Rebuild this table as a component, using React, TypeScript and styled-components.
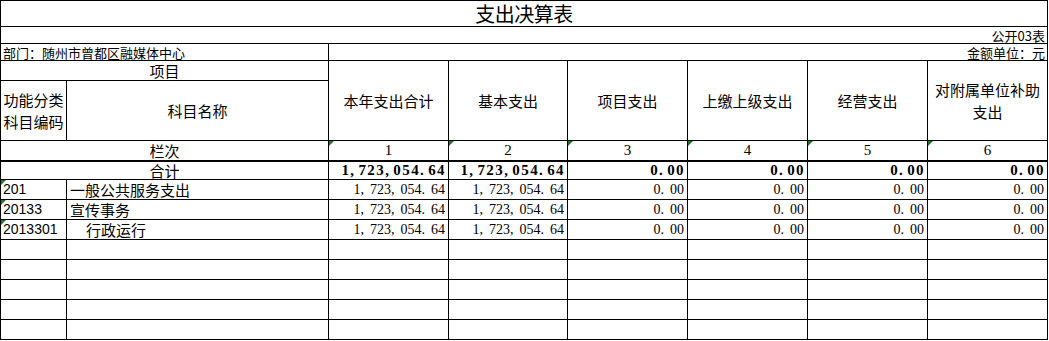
import React from 'react';
import styled, {createGlobalStyle} from 'styled-components';

const GlobalStyle = createGlobalStyle`
  html, body {
    margin: 0;
    padding: 0;
    background: #ffffff;
  }
`;

const Sheet = styled.table`
  border-collapse: collapse;
  table-layout: fixed;
  width: 1047px;
  color: #000;
  font-family: "Noto Sans CJK SC", sans-serif;
  font-size: 15px;
`;

const Row = styled.tr<{ $h: number }>`
  height: ${p => p.$h}px;
`;

const Cell = styled.td<{ $align?: 'left' | 'center' | 'right'; $thick?: boolean; $pad?: number }>`
  border: 1px solid #000;
  ${p => p.$thick && 'border-bottom: 2px solid #000;'}
  padding: 0 ${p => p.$pad ?? 2}px;
  text-align: ${p => p.$align ?? 'center'};
  vertical-align: middle;
  white-space: nowrap;
  overflow: hidden;
  line-height: 17px;
  position: relative;
`;

// the little green "number stored as text" marker excel puts in a cell corner
const FlagCell = styled(Cell)`
  &::before {
    content: "";
    position: absolute;
    left: 0;
    top: 0;
    border-top: 5px solid #1d7a2a;
    border-right: 5px solid transparent;
  }
`;

const Title = styled(Cell)`
  font-size: 20px;
  letter-spacing: -0.5px;
`;

const Small = styled(Cell)`
  font-size: 13px;
  line-height: 15px;
`;

const Head = styled(Cell)`
  white-space: normal;
  line-height: 22px;
  padding: 0 4px;
`;

// two hand-broken lines, as in the sheet
const Stacked = styled(Cell)`
  line-height: 22px;
  padding: 0;
`;

const Code = styled(FlagCell)`
  font-family: "Liberation Sans", sans-serif;
  font-size: 14px;
`;

const ColNo = styled(FlagCell)`
  font-family: "Liberation Serif", serif;
  font-size: 15px;
`;

const Num = styled(Cell)<{ $bold?: boolean }>`
  font-family: "Liberation Serif", serif;
  font-size: ${p => (p.$bold ? 15 : 14)}px;
  font-weight: ${p => (p.$bold ? 700 : 400)};
  letter-spacing: ${p => (p.$bold ? 1.4 : 0)}px;
  text-align: right;
  padding-right: ${p => (p.$bold ? 2 : 3)}px;
`;

const Punct = styled.span<{ $bold?: boolean }>`
  margin-right: ${p => (p.$bold ? 3 : 6)}px;
`;

const Name = styled(Cell)<{ $indent?: boolean }>`
  text-align: left;
  padding-left: ${p => (p.$indent ? 19 : 3)}px;
`;

const widths = [66, 262, 120, 119, 120, 120, 120, 120];

const heads = ['本年支出合计', '基本支出', '项目支出', '上缴上级支出', '经营支出', '对附属单位补助支出'];

const rows = [
    {code: '201', name: '一般公共服务支出', indent: false},
    {code: '20133', name: '宣传事务', indent: false},
    {code: '2013301', name: '行政运行', indent: true},
];

const amounts = ['1,723,054.64', '1,723,054.64', '0.00', '0.00', '0.00', '0.00'];

function Amount({value, bold}: { value: string; bold?: boolean }) {
    return (
        <Num $bold={bold}>
            {value.split(/([,.])/).map((part, i) =>
                part === ',' || part === '.'
                    ? <Punct key={i} $bold={bold}>{part}</Punct>
                    : part
            )}
        </Num>
    );
}

function App() {
    return (
        <>
            <GlobalStyle/>
            <Sheet>
                <colgroup>
                    {widths.map((w, i) => <col key={i} style={{width: w}}/>)}
                </colgroup>
                <tbody>
                <Row $h={26}>
                    <Title colSpan={8}>支出决算表</Title>
                </Row>
                <Row $h={17}>
                    <Small colSpan={8} $align="right">公开03表</Small>
                </Row>
                <Row $h={17}>
                    <Small colSpan={2} $align="left">部门：随州市曾都区融媒体中心</Small>
                    <Small colSpan={6} $align="right">金额单位：元</Small>
                </Row>
                <Row $h={20}>
                    <Cell colSpan={2}>项目</Cell>
                    {heads.map(h => (
                        <Head key={h} rowSpan={2}>{h}</Head>
                    ))}
                </Row>
                <Row $h={60}>
                    <Stacked>功能分类<br/>科目编码</Stacked>
                    <Cell>科目名称</Cell>
                </Row>
                <Row $h={20}>
                    <Cell colSpan={2} $thick>栏次</Cell>
                    {[1, 2, 3, 4, 5, 6].map(n => (
                        <ColNo key={n} $thick>{n}</ColNo>
                    ))}
                </Row>
                <Row $h={19}>
                    <Cell colSpan={2}>合计</Cell>
                    {amounts.map((a, i) => (
                        <Amount key={i} value={a} bold/>
                    ))}
                </Row>
                {rows.map(r => (
                    <Row $h={20} key={r.code}>
                        <Code $align="left">{r.code}</Code>
                        <Name $indent={r.indent}>{r.name}</Name>
                        {amounts.map((a, i) => (
                            <Amount key={i} value={a}/>
                        ))}
                    </Row>
                ))}
                {[0, 1, 2, 3, 4].map(i => (
                    <Row $h={20} key={'e' + i}>
                        {widths.map((_, j) => <Cell key={j}/>)}
                    </Row>
                ))}
                </tbody>
            </Sheet>
        </>
    );
}

export default App;
